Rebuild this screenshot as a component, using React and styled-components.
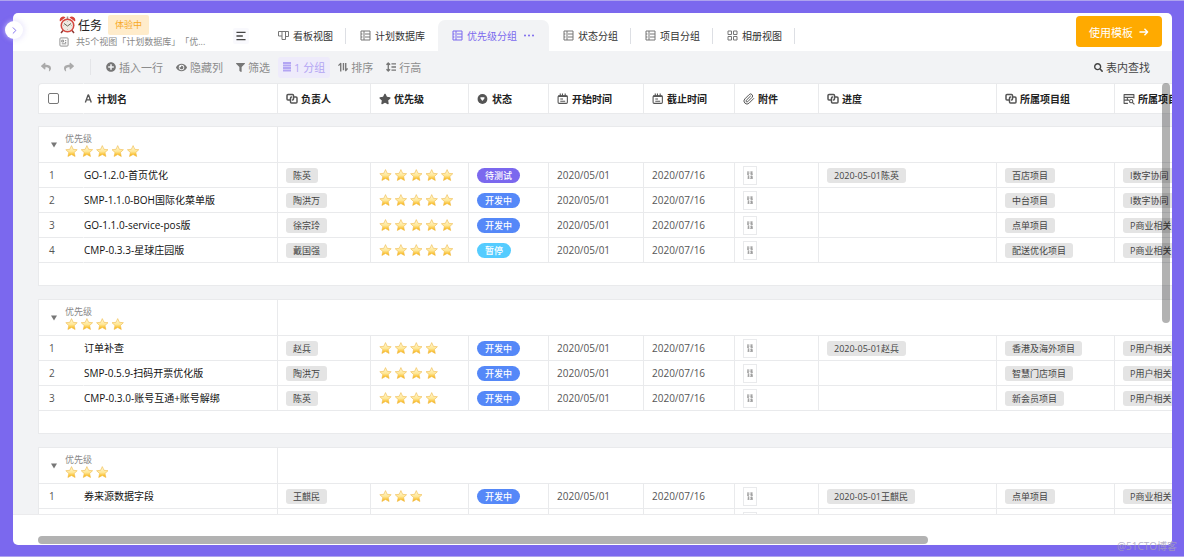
import React, { useState } from 'react'
import styled, { createGlobalStyle, css } from 'styled-components';
import { FaReply, FaShare, FaPlusCircle, FaEye, FaFilter, FaSearch, FaStar } from 'react-icons/fa';
import { LuChevronRight, LuPaperclip } from 'react-icons/lu';


const GlobalStyle = createGlobalStyle`
* { box-sizing: border-box; }
body {
    margin: 0;
    font-family: "Open Sans", "Noto Sans CJK SC", sans-serif;
    font-size: 10px;
    color: #333;
    text-spacing-trim: space-all;
}
button, input { font: inherit; color: inherit; }
button { border: 0; margin: 0; cursor: pointer; }
`;

const Shell = styled.div`
position: relative;
display: flex;
height: 100vh;
padding: 12px 12px 11px 13px;
background: #7b68ee;
border-top: 1px solid #aea3ee;
border-bottom: 1px solid #aea3ee;
`;

const Panel = styled.main`
flex: 1;
min-width: 0;
display: flex;
flex-direction: column;
background: #fff;
border-radius: 5px;
overflow: hidden;
`;

const ExpandButton = styled.button`
position: absolute;
left: 5px;
top: 20px;
width: 18px;
height: 18px;
padding: 0;
display: flex;
align-items: center;
justify-content: center;
border-radius: 50%;
background: #fff;
color: #7b68ee;
box-shadow: 0 0 5px rgba(255, 255, 255, 0.6), 0 0 6px rgba(123, 104, 238, 0.3);
`;

const Header = styled.header`
display: flex;
align-items: flex-end;
height: 38px;
flex: none;
padding: 0 10px 0 46px;
white-space: nowrap;
`;

const Info = styled.div`
width: 152px;
height: 36px;
margin-right: 22px;
`;

const TitleLine = styled.div`
display: flex;
align-items: center;
height: 20px;
gap: 2px;
`;

const Title = styled.h1`
margin: 0;
padding-top: 2px;
font-size: 12px;
line-height: 20px;
font-weight: 400;
color: #222;
`;

const Trial = styled.span`
margin-left: 4px;
padding: 0 7px;
height: 20px;
line-height: 20px;
border-radius: 2px;
background: #ffeccb;
color: #f7a823;
font-size: 9px;
`;

const Summary = styled.div`
display: flex;
align-items: center;
gap: 7px;
height: 14px;
font-size: 9px;
line-height: 14px;
color: #888;
`;

const ListButton = styled.button`
width: 16px;
height: 16px;
margin: 0 15px 7px 0;
padding: 0;
display: flex;
align-items: center;
justify-content: center;
border-radius: 2px;
background: #f9f9fd;
color: #444;
`;

const Tabs = styled.nav`
display: flex;
flex: 1;
`;

const Tab = styled.button`
display: flex;
align-items: center;
gap: 4px;
height: 31px;
padding: 0 12px 0 14px;
background: none;
color: #333;
svg { color: #777; }
${props => props.$active && css`
    padding-right: 14px;
    background: #f2f3f5;
    border-radius: 7px 7px 0 0;
    color: #7b68ee;
    svg { color: #7b68ee; }
    svg:last-child { margin-left: 2px; }
`}
`;

const Divider = styled.span`
width: 1px;
height: 16px;
margin-top: 8px;
background: ${props => props.$hidden ? "transparent" : "#dddfe4"};
`;

const UseButton = styled.button`
display: flex;
align-items: center;
gap: 6px;
height: 31px;
padding: 0 13px;
margin-bottom: 4px;
border-radius: 4px;
background: #ffaa00;
color: #fff;
font-size: 11px;
`;

const Toolbar = styled.div`
display: flex;
align-items: center;
flex: none;
gap: 3px;
height: 32px;
padding: 0 17px 0 23px;
background: #f2f3f5;
white-space: nowrap;
`;

const Tool = styled.button`
display: flex;
align-items: center;
gap: 3px;
height: 21px;
padding: 0 5px;
font-size: 11px;
border-radius: 3px;
background: ${props => props.$active ? "#eeebfb" : "none"};
color: ${props => props.$active ? "#b3a5f3" : props.$dark ? "#444" : "#8c8c8c"};
svg { color: ${props => props.$active ? "#b3a5f3" : props.$dark ? "#444" : props.$faint ? "#aaa" : "#777"}; }
`;

const ToolDivider = styled.span`
width: 1px;
height: 16px;
margin: 0 7px 0 8px;
background: #e4e5e8;
`;

const Spacer = styled.span`
flex: 1;
`;

const Sheet = styled.div`
position: relative;
flex: 1;
min-height: 0;
overflow: hidden;
padding-left: 25px;
background: #f2f3f5;
border-bottom: 1px solid #ebebed;
`;

const Table = styled.table`
width: 1237px;
table-layout: fixed;
border-spacing: 0;
white-space: nowrap;
`;

const Th = styled.th`
height: 31px;
padding: 0 0 0 ${props => props.$flush ? "0" : "8px"};
background: #fff;
border-top: 1px solid #e9eaec;
border-bottom: 1px solid #e9eaec;
border-right: 1px solid ${props => props.$open ? "transparent" : "#e9eaec"};
text-align: left;
font-weight: 600;
color: #222;
&:first-child {
    border-left: 1px solid #e9eaec;
    border-top-left-radius: 4px;
    padding-left: 9px;
}
`;

const HeadLabel = styled.span`
display: flex;
align-items: center;
gap: 3px;
svg { color: #555; flex: none; }
`;

const CheckBox = styled.input`
appearance: none;
display: block;
width: 11px;
height: 11px;
margin: 0;
border: 1px solid #777;
border-radius: 2px;
background: #fff;
`;

const Gap = styled.td`
height: ${props => props.$first ? "12px" : "13px"};
padding: 0;
`;

const GroupCell = styled.td`
height: 37px;
padding: 0 0 0 12px;
background: #fff;
border: 1px solid #e9eaec;
border-left-width: ${props => props.$first ? "1px" : "0"};
`;

const GroupHead = styled.div`
display: flex;
align-items: center;
gap: 8px;
`;

const GroupLabel = styled.div`
font-size: 9px;
line-height: 13px;
color: #888;
svg { display: block; }
`;

const FoldButton = styled.button`
padding: 0;
width: 6px;
height: 12px;
display: flex;
align-items: center;
background: none;
color: #777;
`;

const Cell = styled.td`
height: 25px;
padding: 0 0 0 ${props => props.$flush ? "0" : "8px"};
background: #fff;
line-height: 15px;
border-bottom: 1px solid #e9eaec;
border-right: 1px solid ${props => props.$open ? "transparent" : "#e9eaec"};
color: #555;
&:first-child {
    border-left: 1px solid #e9eaec;
    padding-left: 10px;
}
svg { display: block; }
`;

const PlanName = styled.span`
color: #111;
`;

const FootCell = styled.td`
height: 23px;
padding: 0;
background: #fff;
border: 1px solid #e9eaec;
border-top: 0;
`;

const Chip = styled.span`
display: block;
width: fit-content;
height: 15px;
padding: 0 7px;
border-radius: 3px;
background: #e4e4e4;
color: #444;
font-size: 9px;
line-height: 15px;
`;

const statusColors = { "待测试": "#7b68ee", "开发中": "#5588f8", "暂停": "#55ccff" };

const Pill = styled(Chip)`
padding: 0 8px;
border-radius: 8px;
background: ${props => statusColors[props.$status]};
color: #fff;
font-weight: 500;
`;

const Thumb = styled.span`
display: block;
width: 14px;
height: 19px;
border: 1px solid #e9eaec;
`;

const ScrollThumb = styled.div`
position: absolute;
right: 2px;
top: 0;
width: 8px;
height: 240px;
border-radius: 4px;
background: rgba(0, 0, 0, 0.3);
`;

const Footer = styled.footer`
flex: none;
display: flex;
align-items: flex-end;
height: 30px;
padding: 0 21px 1px 25px;
`;

const ScrollBar = styled.div`
width: 80%;
height: 8px;
border-radius: 4px;
background: #b2b2b2;
`;

const Watermark = styled.span`
position: absolute;
right: 7px;
bottom: 3px;
font-size: 10px;
line-height: 14px;
color: rgba(165, 160, 185, 0.8);
`;


const Svg = ({ w = 11, h = 11, box = "0 0 22 22", children }) => (
    <svg width={w} height={h} viewBox={box} fill="none" stroke="currentColor" strokeWidth="2" strokeLinejoin="round" aria-hidden="true">{children}</svg>
)

const KanbanIcon = () => <Svg><path d="M1 3h20v10h-6V3M8 3v16h7V3M1 3v9h7" /></Svg>
const TableIcon = () => <Svg><rect x="2" y="2" width="18" height="18" /><path d="M8 2v18M2 8h3M2 14h3M10 8h10M10 14h10" /></Svg>
const GalleryIcon = () => <Svg><rect x="2" y="2" width="7" height="7" /><rect x="13" y="2" width="7" height="7" /><rect x="2" y="13" width="7" height="7" /><rect x="13" y="13" width="7" height="7" /></Svg>
const DotsIcon = () => <Svg w={12}><g fill="currentColor" stroke="none"><circle cx="3" cy="11" r="2" /><circle cx="11" cy="11" r="2" /><circle cx="19" cy="11" r="2" /></g></Svg>
const MenuIcon = () => <Svg w={10} h={10}><path d="M1 3h20M1 11h14M1 19h20" strokeWidth="3" /></Svg>
const NoteIcon = () => <Svg w={10} h={10}><rect x="2" y="2" width="18" height="18" rx="2" /><path d="M6 7h4v4H6zM13 8h3M6 15h10M13 12h3" /></Svg>
const ArrowIcon = () => <Svg w={10} h={10}><path d="M1 11h18M12 4l7 7-7 7" strokeWidth="3" /></Svg>
const GroupIcon = () => <Svg w={8} h={10} box="0 0 16 20"><path d="M0 2h16M0 7h16M0 12h16M0 17h16" strokeWidth="4" /></Svg>
const SortIcon = () => <Svg w={10} h={10}><path d="M6 21V3L1 8M12 2v16M17 2v17l4-5" strokeWidth="3" /></Svg>
const HeightIcon = () => <Svg w={10} h={10}><path d="M5 3v16M1 6l4-4 4 4M1 16l4 4 4-4M12 4h10M12 11h10M12 18h10" strokeWidth="3" /></Svg>
const RelationIcon = () => <Svg w={12} h={12} box="0 0 24 24"><path d="M8 14H4a2 2 0 0 1-2-2V5a2 2 0 0 1 2-2h9a2 2 0 0 1 2 2v7a2 2 0 0 1-2 2h-1M16 8h4a2 2 0 0 1 2 2v8a2 2 0 0 1-2 2h-9a2 2 0 0 1-2-2v-8a2 2 0 0 1 2-2h1" strokeWidth="3" /></Svg>
const StatusIcon = () => <Svg w={12} h={12}><circle cx="10" cy="11" r="9" fill="currentColor" stroke="none" /><path d="M7 9h6l-3 4z" fill="#fff" stroke="#fff" /></Svg>
const DateIcon = () => <Svg w={12} h={12}><rect x="2" y="5" width="17" height="14" rx="2" /><path d="M2 6h17" strokeWidth="3" /><path d="M6 1v5M10 1v5M15 1v5M6 11h5M6 15h9" /></Svg>
const LookupIcon = () => <Svg w={12} h={12}><path d="M9 19H2V3h18v7M2 8h18M8 8v5h3M2 13h6" /><circle cx="15" cy="15" r="3" /><path d="M17 17l4 4" /></Svg>
const TextIcon = () => <Svg w={10}><path d="M3 20L9 3h1l6 17M5 14h9" strokeWidth="3" /></Svg>
const CaretIcon = () => <Svg w={6} h={6} box="0 0 12 12"><path d="M0 1h12L6 11z" fill="currentColor" stroke="none" /></Svg>

const ClockIcon = () => (
    <svg width="17" height="18" viewBox="0 0 34 36" aria-hidden="true">
        <path d="M8 29l-4 5M26 29l4 5" stroke="#8d3a35" strokeWidth="3" />
        <path d="M2 11a7 7 0 0 1 11-8zM32 11a7 7 0 0 0-11-8z" fill="#d8443c" />
        <path d="M17 1v5" stroke="#999" strokeWidth="3" />
        <circle cx="17" cy="19" r="14" fill="#d4473f" />
        <circle cx="17" cy="19" r="11" fill="#efe9e2" />
        <path d="M10 15l7 5 7-5" fill="none" stroke="#665" strokeWidth="2" />
        <path d="M17 10v2M17 26v2M8 19h2M24 19h2" stroke="#998" strokeWidth="1" />
    </svg>
)

const Rating = ({ count }) => (
    <svg width={Math.round(count * 15.5)} height="13" role="img" aria-label={`${count}`}>
        <defs>
            <linearGradient id="starFill" x1="0" y1="0" x2="0" y2="1">
                <stop offset="0.2" stopColor="#fff3c4" />
                <stop offset="0.55" stopColor="#ffe693" />
                <stop offset="0.9" stopColor="#f9b91c" />
            </linearGradient>
        </defs>
        {Array.from({ length: count }, (_, i) => (
            <path
                key={i}
                transform={`translate(${i * 15.4} 0)`}
                d="M6.5 0.6l1.7 3.700 4 .4-3 2.800.9 4-3.600-2-3.600 2 .9-4-3-2.800 4-.4z"
                fill="url(#starFill)" stroke="#f0bb4a" strokeWidth="0.6" strokeLinejoin="round"
            />
        ))}
    </svg>
)

const FileThumb = () => (
    <Thumb>
        <svg width="12" height="17" viewBox="0 0 12 17" fill="none" stroke="#888" strokeWidth="0.6" aria-hidden="true">
            <path d="M3 5h2.500M3 6.300h2.500M4 4.500v3M3 7.500h2M6 5h3M6 6.300h3M7.500 4.500v3M6.500 7.500h2.500M3.500 9h2M3.500 10.300h2M4.500 8.500v3M3.500 11.500h2M6 9.300h3M6.500 10.500h2.500M7.500 8.500v3M6 11.500h3" />
        </svg>
    </Thumb>
)


const tabs = [
    { name: "看板视图", icon: <KanbanIcon />, line: true },
    { name: "计划数据库", icon: <TableIcon /> },
    { name: "优先级分组", icon: <TableIcon /> },
    { name: "状态分组", icon: <TableIcon />, line: true },
    { name: "项目分组", icon: <TableIcon />, line: true },
    { name: "相册视图", icon: <GalleryIcon />, line: true },
]

const columns = [
    { name: "负责人", icon: <RelationIcon /> },
    { name: "优先级", icon: <FaStar size={12} /> },
    { name: "状态", icon: <StatusIcon /> },
    { name: "开始时间", icon: <DateIcon /> },
    { name: "截止时间", icon: <DateIcon /> },
    { name: "附件", icon: <LuPaperclip size={12} /> },
    { name: "进度", icon: <RelationIcon /> },
    { name: "所属项目组", icon: <RelationIcon /> },
    { name: "所属项目", icon: <LookupIcon /> },
]

const colWidths = [46, 194, 93, 98, 80, 95, 91, 84, 178, 118, 160]

const groups = [
    { stars: 5, rows: [
        { name: "GO-1.2.0-首页优化", owner: "陈英", status: "待测试", progress: "2020-05-01陈英", team: "百店项目", project: "I数字协同" },
        { name: "SMP-1.1.0-BOH国际化菜单版", owner: "陶洪万", status: "开发中", team: "中台项目", project: "I数字协同" },
        { name: "GO-1.1.0-service-pos版", owner: "徐宗玲", status: "开发中", team: "点单项目", project: "P商业相关" },
        { name: "CMP-0.3.3-星球庄园版", owner: "戴国强", status: "暂停", team: "配送优化项目", project: "P商业相关" },
    ]},
    { stars: 4, rows: [
        { name: "订单补查", owner: "赵兵", status: "开发中", progress: "2020-05-01赵兵", team: "香港及海外项目", project: "P用户相关" },
        { name: "SMP-0.5.9-扫码开票优化版", owner: "陶洪万", status: "开发中", team: "智慧门店项目", project: "P用户相关" },
        { name: "CMP-0.3.0-账号互通+账号解绑", owner: "陈英", status: "开发中", team: "新会员项目", project: "P用户相关" },
    ]},
    { stars: 3, rows: [
        { name: "券来源数据字段", owner: "王麒民", status: "开发中", progress: "2020-05-01王麒民", team: "点单项目", project: "P商业相关" },
        { name: "", owner: "王麒民", status: "暂停", team: "点单项目", project: "P商业相关" },
    ]},
]


const PlanRow = ({ row, index, stars }) => (
    <tr>
        <Cell $open>{index + 1}</Cell>
        <Cell $flush><PlanName>{row.name}</PlanName></Cell>
        <Cell><Chip>{row.owner}</Chip></Cell>
        <Cell><Rating count={stars} /></Cell>
        <Cell><Pill $status={row.status}>{row.status}</Pill></Cell>
        <Cell>2020/05/01</Cell>
        <Cell>2020/07/16</Cell>
        <Cell><FileThumb /></Cell>
        <Cell>{row.progress && <Chip>{row.progress}</Chip>}</Cell>
        <Cell><Chip>{row.team}</Chip></Cell>
        <Cell><Chip>{row.project}</Chip></Cell>
    </tr>
)

const PlanGroup = ({ group, first }) => {
    const [open, setOpen] = useState(true)

    return (
        <tbody>
            <tr><Gap $first={first} colSpan={11} /></tr>
            <tr>
                <GroupCell $first colSpan={2}>
                    <GroupHead>
                        <FoldButton aria-label="折叠" onClick={() => setOpen(!open)}><CaretIcon /></FoldButton>
                        <GroupLabel>优先级<Rating count={group.stars} /></GroupLabel>
                    </GroupHead>
                </GroupCell>
                <GroupCell colSpan={9} />
            </tr>
            {open && group.rows.map((row, i) => <PlanRow key={i} row={row} index={i} stars={group.stars} />)}
            <tr><FootCell colSpan={11} /></tr>
        </tbody>
    )
}

const App = () => {
    const [activeTab, setActiveTab] = useState("优先级分组")

    return (
        <Shell>
            <GlobalStyle />
            <Panel>
                <Header>
                    <Info>
                        <TitleLine>
                            <ClockIcon />
                            <Title>任务</Title>
                            <Trial>体验中</Trial>
                        </TitleLine>
                        <Summary><NoteIcon />共5个视图「计划数据库」「优...</Summary>
                    </Info>
                    <ListButton aria-label="视图列表"><MenuIcon /></ListButton>
                    <Tabs>
                        {tabs.map(tab => (
                            <React.Fragment key={tab.name}>
                                <Tab $active={tab.name === activeTab} onClick={() => setActiveTab(tab.name)}>
                                    {tab.icon}{tab.name}
                                    {tab.name === activeTab && <DotsIcon />}
                                </Tab>
                                {tab.name !== activeTab && <Divider $hidden={!tab.line} />}
                            </React.Fragment>
                        ))}
                    </Tabs>
                    <UseButton>使用模板<ArrowIcon /></UseButton>
                </Header>
                <Toolbar>
                    <Tool $faint aria-label="撤销"><FaReply size={10} /></Tool>
                    <Tool $faint aria-label="重做"><FaShare size={10} /></Tool>
                    <ToolDivider />
                    <Tool><FaPlusCircle size={10} />插入一行</Tool>
                    <Tool><FaEye size={11} />隐藏列</Tool>
                    <Tool><FaFilter size={9} />筛选</Tool>
                    <Tool $active><GroupIcon />1 分组</Tool>
                    <Tool><SortIcon />排序</Tool>
                    <Tool><HeightIcon />行高</Tool>
                    <Spacer />
                    <Tool $dark><FaSearch size={9} />表内查找</Tool>
                </Toolbar>
                <Sheet>
                    <Table>
                        <colgroup>
                            {colWidths.map((w, i) => <col key={i} style={{width: w}} />)}
                        </colgroup>
                        <thead>
                            <tr>
                                <Th $open><CheckBox type="checkbox" aria-label="全选" /></Th>
                                <Th $flush><HeadLabel><TextIcon />计划名</HeadLabel></Th>
                                {columns.map(col => (
                                    <Th key={col.name}><HeadLabel>{col.icon}{col.name}</HeadLabel></Th>
                                ))}
                            </tr>
                        </thead>
                        {groups.map((group, i) => <PlanGroup key={group.stars} group={group} first={i === 0} />)}
                    </Table>
                    <ScrollThumb />
                </Sheet>
                <Footer><ScrollBar /></Footer>
            </Panel>
            <ExpandButton aria-label="展开"><LuChevronRight size={11} /></ExpandButton>
            <Watermark>@51CTO博客</Watermark>
        </Shell>
    )
}

export default App
